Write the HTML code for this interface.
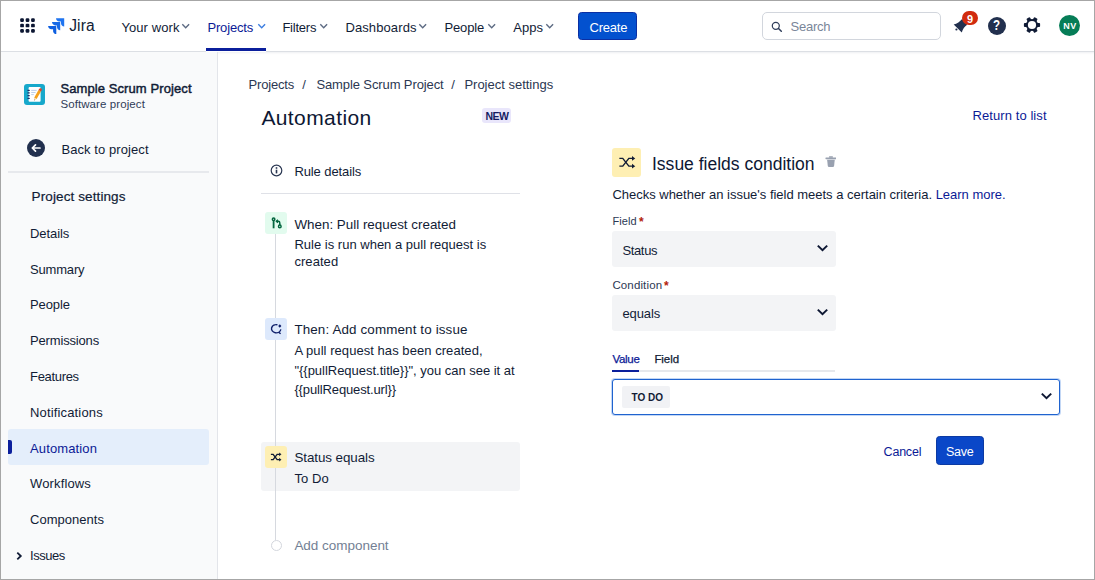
<!DOCTYPE html>
<html lang="en">
<head>
<meta charset="utf-8">
<title>Automation - Sample Scrum Project - Jira</title>
<style>
*{box-sizing:border-box;margin:0;padding:0}
html,body{width:1095px;height:580px;overflow:hidden;background:#fff}
body{font-family:"Liberation Sans",Arial,sans-serif;font-size:13px;color:#111c36;position:relative}
.abs,.t{position:absolute}
.t{white-space:nowrap;line-height:16px}
#frame{position:absolute;left:0;top:0;width:1095px;height:580px;border:1px solid #a6a6a6;z-index:50;pointer-events:none}
#hdr{position:absolute;left:0;top:0;width:1095px;height:52px;background:#fff;border-bottom:1px solid #dcdfe4;box-shadow:0 1px 2px rgba(9,30,66,.07)}
.nav{font-size:13px;top:19.5px}
.chev{position:absolute;top:23px}
#side{position:absolute;left:0;top:52px;width:218px;height:528px;background:#f9fafb;border-right:1px solid #e3e5ea}
.si{font-size:13px;left:30px}
.link{color:#0b1a96}
.desc{font-size:13px}
.ttl{font-size:13.4px}
.bc{top:76.500px;font-size:13px;color:#2b3752}
/*FIT*/
#jira{letter-spacing:0.090px}
#n1{letter-spacing:0.097px}
#n2{letter-spacing:-0.146px}
#n3{letter-spacing:-0.227px}
#n4{letter-spacing:0.109px}
#n5{letter-spacing:-0.114px}
#n6{letter-spacing:0.090px}
#create{letter-spacing:-0.239px}
#search{letter-spacing:-0.267px}
#pname{letter-spacing:0.094px}
#psub{letter-spacing:0.093px}
#back{letter-spacing:0.080px}
#pset{letter-spacing:0.106px}
#s1{letter-spacing:-0.079px}
#s2{letter-spacing:-0.175px}
#s3{letter-spacing:-0.114px}
#s4{letter-spacing:-0.163px}
#s5{letter-spacing:-0.314px}
#s6{letter-spacing:0.153px}
#s7{letter-spacing:0.123px}
#s8{letter-spacing:0.142px}
#s9{letter-spacing:0.028px}
#s10{letter-spacing:-0.463px}
#bc1{letter-spacing:-0.196px}
#bc2{letter-spacing:-0.106px}
#bc3{letter-spacing:-0.005px}
#h1{letter-spacing:0.397px}
#new{letter-spacing:-0.433px}
#rd{letter-spacing:-0.095px}
#w1{letter-spacing:0.003px}
#w2{letter-spacing:0.009px}
#w3{letter-spacing:0.061px}
#t1{letter-spacing:0.134px}
#t2{letter-spacing:0.054px}
#t3{letter-spacing:-0.019px}
#t4{letter-spacing:-0.131px}
#c1{letter-spacing:-0.074px}
#c2{letter-spacing:0.126px}
#ac{letter-spacing:-0.029px}
#rtl{letter-spacing:0.080px}
#h2{letter-spacing:0.006px}
#chk{letter-spacing:-0.013px}
#l1{letter-spacing:0.071px}
#v1{letter-spacing:-0.343px}
#l2{letter-spacing:0.134px}
#v2{letter-spacing:-0.085px}
#tb1{letter-spacing:-0.272px}
#tb2{letter-spacing:-0.067px}
#todo{letter-spacing:0.063px}
#cancel{letter-spacing:-0.220px}
#save{letter-spacing:-0.225px}
#nv{letter-spacing:0.442px}
/*ENDFIT*/
</style>
</head>
<body>
<!-- HEADER -->
<div id="hdr">
  <svg class="abs" style="left:20px;top:18px" width="15" height="15" viewBox="0 0 15 15" fill="#0c1632">
    <rect x="0.2" y="0.2" width="3.7" height="3.7" rx="1.2"/><rect x="5.65" y="0.2" width="3.7" height="3.7" rx="1.2"/><rect x="11.1" y="0.2" width="3.7" height="3.7" rx="1.2"/>
    <rect x="0.2" y="5.65" width="3.7" height="3.7" rx="1.2"/><rect x="5.65" y="5.65" width="3.7" height="3.7" rx="1.2"/><rect x="11.1" y="5.65" width="3.7" height="3.7" rx="1.2"/>
    <rect x="0.2" y="11.1" width="3.7" height="3.7" rx="1.2"/><rect x="5.65" y="11.1" width="3.7" height="3.7" rx="1.2"/><rect x="11.1" y="11.1" width="3.7" height="3.7" rx="1.2"/>
  </svg>
  <svg class="abs" style="left:48px;top:17.500px" width="16.500" height="16.500" viewBox="0 0 16.500 16.500">
    <path d="M8 0.200 H16.200 V8.400 C14.400 8.400 13 7 13 5.200 V3.500 H11.300 C9.500 3.500 8 2 8 0.200Z" fill="#1f74f0"/>
    <path d="M4 4.100 H12.200 V12.300 C10.400 12.300 9 10.900 9 9.100 V7.400 H7.300 C5.500 7.400 4 5.900 4 4.100Z" fill="#176ae6"/>
    <path d="M0.100 8 H8.300 V16.200 C6.500 16.200 5.100 14.800 5.100 13 V11.300 H3.400 C1.600 11.300 0.100 9.800 0.100 8Z" fill="#0e5fe0"/>
  </svg>
  <span class="t" id="jira" style="left:69.200px;top:15.800px;font-size:15.600px;line-height:20px;color:#111c36">Jira</span>

  <span class="t nav" id="n1" style="left:121.400px">Your work</span>
  <span class="t nav" id="n2" style="left:207.400px;color:#0b1a96">Projects</span>
  <span class="t nav" id="n3" style="left:282.400px">Filters</span>
  <span class="t nav" id="n4" style="left:345.400px">Dashboards</span>
  <span class="t nav" id="n5" style="left:444.400px">People</span>
  <span class="t nav" id="n6" style="left:513.200px">Apps</span>
  <svg class="chev" style="left:181px" width="9" height="7" viewBox="0 0 9 7"><path d="M1.300 1.300 L4.700 4.700 L8.100 1.300" fill="none" stroke="#5c6a82" stroke-width="1.400"/></svg>
  <svg class="chev" style="left:256.500px" width="9" height="7" viewBox="0 0 9 7"><path d="M1.300 1.300 L4.700 4.700 L8.100 1.300" fill="none" stroke="#3b7de0" stroke-width="1.400"/></svg>
  <svg class="chev" style="left:319px" width="9" height="7" viewBox="0 0 9 7"><path d="M1.300 1.300 L4.700 4.700 L8.100 1.300" fill="none" stroke="#5c6a82" stroke-width="1.400"/></svg>
  <svg class="chev" style="left:418px" width="9" height="7" viewBox="0 0 9 7"><path d="M1.300 1.300 L4.700 4.700 L8.100 1.300" fill="none" stroke="#5c6a82" stroke-width="1.400"/></svg>
  <svg class="chev" style="left:487px" width="9" height="7" viewBox="0 0 9 7"><path d="M1.300 1.300 L4.700 4.700 L8.100 1.300" fill="none" stroke="#5c6a82" stroke-width="1.400"/></svg>
  <svg class="chev" style="left:545px" width="9" height="7" viewBox="0 0 9 7"><path d="M1.300 1.300 L4.700 4.700 L8.100 1.300" fill="none" stroke="#5c6a82" stroke-width="1.400"/></svg>
  <div class="abs" style="left:206px;top:48px;width:60px;height:3px;background:#0b1f9c"></div>
  <div class="abs" style="left:206px;top:51px;width:60px;height:1px;background:#fff"></div>

  <div class="abs" style="left:578px;top:12px;width:59px;height:28px;background:#0351cf;border-radius:3.500px;border:1px solid #0b2fa3"></div>
  <span class="t" id="create" style="left:589.600px;top:19.500px;font-size:13px;color:#fff">Create</span>

  <div class="abs" style="left:762px;top:12px;width:179px;height:28px;border:1px solid #d2d6dd;border-radius:5px;background:#fff"></div>
  <svg class="abs" style="left:770.500px;top:20.500px" width="12" height="12" viewBox="0 0 12 12"><circle cx="4.800" cy="4.800" r="3.500" fill="none" stroke="#2f3d5a" stroke-width="1.250"/><path d="M7.500 7.500 L10.300 10.300" stroke="#2f3d5a" stroke-width="1.500" stroke-linecap="round"/></svg>
  <span class="t" id="search" style="left:790.600px;top:18.500px;font-size:13px;color:#7a8699">Search</span>

  <svg class="abs" style="left:951px;top:16px" width="20" height="20" viewBox="0 0 20 20">
    <path d="M2.700 8.500 C6 7.600 9 5.600 11.100 3 L16.200 8.800 C13.600 10.600 11.600 13.400 10.800 16.500 Z" fill="#22304e"/>
    <circle cx="5.400" cy="13.500" r="1.100" fill="#22304e"/>
  </svg>
  <div class="abs" style="left:962.400px;top:10.700px;width:15.600px;height:14.700px;border-radius:8px;background:#d12b0e"></div>
  <span class="t" id="nine" style="left:967px;top:11.800px;font-size:11px;line-height:15px;color:#fff;font-weight:bold">9</span>

  <div class="abs" style="left:988px;top:16.800px;width:17.800px;height:17.800px;border-radius:9px;background:#22304e"></div>
  <span class="t" id="qm" style="left:992.400px;top:17.300px;font-size:14.500px;line-height:17px;color:#fff;font-weight:bold;display:inline-block;transform:scaleX(.8)">?</span>

  <svg class="abs" style="left:1021.700px;top:15.400px" width="20" height="20" viewBox="0 0 20 20">
    <g fill="#111c36">
      <rect x="8" y="1.900" width="4" height="16.200" rx="1" transform="rotate(30 10 10)"/>
      <rect x="8" y="1.900" width="4" height="16.200" rx="1" transform="rotate(90 10 10)"/>
      <rect x="8" y="1.900" width="4" height="16.200" rx="1" transform="rotate(150 10 10)"/>
      <circle cx="10" cy="10" r="6.100"/>
    </g>
    <circle cx="10" cy="10" r="4.100" fill="#fff"/>
  </svg>

  <div class="abs" style="left:1059px;top:15px;width:21px;height:21px;border-radius:11px;background:#067d57"></div>
  <span class="t" id="nv" style="left:1063.300px;top:17.800px;font-size:9px;line-height:16px;color:#fff;font-weight:bold">NV</span>
</div>

<!-- SIDEBAR -->
<div id="side"></div>
<div class="abs" style="left:24px;top:84px;width:21px;height:21px;border-radius:3px;background:#17a8cb"></div>
<svg class="abs" style="left:24px;top:84px" width="21" height="21" viewBox="0 0 21 21">
  <rect x="4.600" y="3" width="12" height="14.800" rx="1" fill="#fefefe"/>
  <g fill="#1d2f6b"><rect x="3.400" y="5.700" width="2.400" height="1.200" rx=".5"/><rect x="3.400" y="8.300" width="2.400" height="1.200" rx=".5"/><rect x="3.400" y="11" width="2.400" height="1.200" rx=".5"/><rect x="3.400" y="13.800" width="2.400" height="1.200" rx=".5"/></g>
  <g stroke="#b5cbe8" stroke-width=".9"><path d="M7.200 6.400H12.600M7.200 8.500H11.600M7.200 10.600H9.800"/></g>
  <path d="M14.480 6.110 L16.920 7.490 L12.620 15.090 L10.180 13.710Z" fill="#f5a11c"/>
  <path d="M14.480 6.110 L15.100 5 C15.600 4.200 16.600 4.100 17.300 4.600 C18 5.100 18.100 5.900 17.600 6.500 L16.920 7.490Z" fill="#e0442e"/>
  <path d="M10.180 13.710 L12.620 15.090 L10.200 16.600Z" fill="#f3d7a6"/>
  <path d="M10.160 15.500 L11 16.050 L10.200 16.600Z" fill="#333"/>
</svg>
<span class="t" id="pname" style="left:60.400px;top:80.500px;font-size:13px;-webkit-text-stroke:.45px #111c36">Sample Scrum Project</span>
<span class="t" id="psub" style="left:60.400px;top:96px;font-size:11.500px;color:#303c58">Software project</span>

<div class="abs" style="left:27px;top:139px;width:18px;height:18px;border-radius:9px;background:#22304e"></div>
<svg class="abs" style="left:27px;top:139px" width="18" height="18" viewBox="0 0 18 18"><path d="M13 9 H5.500 M8.500 5.800 L5.300 9 L8.500 12.200" fill="none" stroke="#fff" stroke-width="1.700" stroke-linecap="round" stroke-linejoin="round"/></svg>
<span class="t" id="back" style="left:61.400px;top:141.500px;font-size:13px">Back to project</span>
<div class="abs" style="left:8px;top:171px;width:201px;height:2px;background:#e7e9ed"></div>
<span class="t" id="pset" style="left:31.600px;top:189.300px;font-size:13.500px;-webkit-text-stroke:.2px #111c36">Project settings</span>

<div class="abs" style="left:8px;top:429px;width:201px;height:36px;border-radius:3px;background:#e4eefb"></div>
<div class="abs" style="left:8px;top:440px;width:4px;height:14px;border-radius:0 2px 2px 0;background:#0b1f9c"></div>
<span class="t si" id="s1" style="top:225.500px">Details</span>
<span class="t si" id="s2" style="top:261.500px">Summary</span>
<span class="t si" id="s3" style="top:296.500px">People</span>
<span class="t si" id="s4" style="top:332.500px">Permissions</span>
<span class="t si" id="s5" style="top:368.500px">Features</span>
<span class="t si" id="s6" style="top:404.500px">Notifications</span>
<span class="t si" id="s7" style="top:440.500px;color:#0b1a96">Automation</span>
<span class="t si" id="s8" style="top:475.500px">Workflows</span>
<span class="t si" id="s9" style="top:511.500px">Components</span>
<span class="t si" id="s10" style="top:547.500px">Issues</span>
<svg class="abs" style="left:15px;top:550.500px" width="8" height="10" viewBox="0 0 8 10"><path d="M2.300 1.600 L5.800 5 L2.300 8.400" fill="none" stroke="#111c36" stroke-width="1.800"/></svg>

<!-- MAIN LEFT -->
<span class="t bc" id="bc1" style="left:248.600px">Projects</span>
<span class="t bc" style="left:302.300px">/</span>
<span class="t bc" id="bc2" style="left:316.400px">Sample Scrum Project</span>
<span class="t bc" style="left:451.200px">/</span>
<span class="t bc" id="bc3" style="left:464.400px">Project settings</span>
<span class="t" id="h1" style="left:261.400px;top:103.700px;font-size:21px;line-height:28px;color:#0d1733">Automation</span>
<div class="abs" style="left:481.600px;top:107.800px;width:29px;height:14.800px;border-radius:3px;background:#e9e6fb"></div>
<span class="t" id="new" style="left:485.400px;top:108px;font-size:10.500px;font-weight:bold;color:#151c63">NEW</span>

<svg class="abs" style="left:269.600px;top:163.600px" width="13" height="13" viewBox="0 0 13 13"><circle cx="6.500" cy="6.500" r="5.300" fill="none" stroke="#2b3853" stroke-width="1.200"/><rect x="5.700" y="5.700" width="1.600" height="3.700" fill="#2b3853"/><rect x="5.700" y="3.200" width="1.600" height="1.600" fill="#2b3853"/></svg>
<span class="t desc" id="rd" style="left:294.400px;top:163.500px">Rule details</span>
<div class="abs" style="left:261px;top:193px;width:259px;height:1px;background:#dfe1e7"></div>

<span class="t ttl" id="w1" style="left:294.400px;top:217.400px">When: Pull request created</span>
<span class="t desc" id="w2" style="left:294.400px;top:237px">Rule is run when a pull request is</span>
<span class="t desc" id="w3" style="left:294.400px;top:254px">created</span>

<span class="t ttl" id="t1" style="left:294.400px;top:322.300px">Then: Add comment to issue</span>
<span class="t desc" id="t2" style="left:294.400px;top:343px">A pull request has been created,</span>
<span class="t desc" id="t3" style="left:294.400px;top:362.500px">"{{pullRequest.title}}", you can see it at</span>
<span class="t desc" id="t4" style="left:294.400px;top:381.500px">{{pullRequest.url}}</span>

<div class="abs" style="left:261px;top:442px;width:259px;height:49px;border-radius:3px;background:#f3f4f6"></div>
<div class="abs" style="left:275px;top:234px;width:1px;height:306px;background:#d6d9df"></div>
<div class="abs" style="left:265px;top:212px;width:22px;height:22px;border-radius:3px;background:#e2fbee"></div>
<svg class="abs" style="left:270.500px;top:217px" width="11" height="12" viewBox="0 0 11 12" fill="none" stroke="#04663f" stroke-width="1.500">
  <circle cx="2.600" cy="2.200" r="1.250"/><path d="M2.600 3.500 V11.300" stroke-width="1.800"/><path d="M5.600 4.200 H7.300 C8.400 4.200 8.800 4.800 8.800 5.900 V8"/><circle cx="8.800" cy="9.400" r="1.300"/><path d="M6.900 2.700 L5.300 4.200 L6.900 5.700" stroke-width="1.300"/>
</svg>
<div class="abs" style="left:265px;top:318px;width:22px;height:22px;border-radius:3px;background:#dde9fc"></div>
<svg class="abs" style="left:270px;top:323px" width="13" height="12" viewBox="0 0 13 12" fill="none" stroke="#10206b" stroke-width="1.400">
  <path d="M7.420 1.740 A4.700 4.100 0 1 0 10.830 6.410"/><path d="M9.800 1.200 L11.400 3 L9.800 4.800 L8.200 3Z" fill="#10206b" stroke="none"/><path d="M8.700 9.200 L10.600 10.800" stroke-width="1.500"/>
</svg>
<div class="abs" style="left:265px;top:446px;width:22px;height:22px;border-radius:3px;background:#feefb3"></div>
<svg class="abs" style="left:270px;top:452px" width="12.500" height="10" viewBox="0 0 14 12" preserveAspectRatio="none" fill="none" stroke="#111c36" stroke-width="1.500">
  <path d="M1 2.800 H3.500 L8 9.200 H11"/><path d="M1 9.200 H3.500 L8 2.800 H11"/><path d="M10.300 0.600 L12.800 2.800 L10.300 5Z" fill="#111c36" stroke="none"/><path d="M10.300 7 L12.800 9.200 L10.300 11.400Z" fill="#111c36" stroke="none"/>
</svg>
<span class="t ttl" id="c1" style="left:294.400px;top:450px">Status equals</span>
<span class="t desc" id="c2" style="left:294.400px;top:470.500px">To Do</span>

<div class="abs" style="left:270.500px;top:540px;width:11px;height:11px;border-radius:6px;background:#fff;border:1.500px solid #d3d6dd"></div>
<span class="t" id="ac" style="left:294.400px;top:538px;font-size:13.500px;color:#737f94">Add component</span>

<!-- MAIN RIGHT -->
<span class="t link" id="rtl" style="left:972.500px;top:108.200px;font-size:13px">Return to list</span>

<div class="abs" style="left:612px;top:148px;width:29px;height:29px;border-radius:3px;background:#feefb3"></div>
<svg class="abs" style="left:617.600px;top:155px" width="19" height="14.600" viewBox="0 0 14 12" preserveAspectRatio="none" fill="none" stroke="#111c36" stroke-width="1">
  <path d="M1 2.800 H3.500 L8 9.200 H11"/><path d="M1 9.200 H3.500 L8 2.800 H11"/><path d="M10.300 0.800 L12.700 2.800 L10.300 4.800Z" fill="#111c36" stroke="none"/><path d="M10.300 7.200 L12.700 9.200 L10.300 11.200Z" fill="#111c36" stroke="none"/>
</svg>
<span class="t" id="h2" style="left:652px;top:153px;font-size:17.500px;line-height:22px;color:#0d1733">Issue fields condition</span>
<svg class="abs" style="left:824.600px;top:155.800px" width="11.900" height="11.700" viewBox="0 0 13 13" preserveAspectRatio="none" fill="#99a1b0"><rect x="0.500" y="1.600" width="12" height="1.900" rx=".6"/><rect x="4.300" y=".4" width="4.400" height="1.600" rx=".5"/><path d="M2.300 4.300 H10.700 L9.900 11 C9.800 11.700 9.400 12.100 8.700 12.100 H4.300 C3.600 12.100 3.200 11.700 3.100 11Z"/></svg>

<span class="t" id="chk" style="left:612.400px;top:187px;font-size:13px">Checks whether an issue's field meets a certain criteria. <span class="link">Learn more.</span></span>

<span class="t" id="l1" style="left:612.400px;top:212.800px;font-size:11px;color:#2c3854">Field</span>
<span class="t" style="left:639px;top:213.500px;font-size:12px;color:#b3200c;font-weight:bold">*</span>
<div class="abs" style="left:612px;top:231px;width:224px;height:36px;border-radius:3px;background:#f3f4f6"></div>
<span class="t" id="v1" style="left:622.400px;top:242.500px;font-size:13px">Status</span>
<svg class="abs" style="left:816px;top:243.500px" width="13" height="9" viewBox="0 0 13 9"><path d="M1.800 1.600 L6.500 6.100 L11.200 1.600" fill="none" stroke="#0d1733" stroke-width="2"/></svg>

<span class="t" id="l2" style="left:612.400px;top:276.600px;font-size:11.500px;color:#2c3854">Condition</span>
<span class="t" style="left:664px;top:277.500px;font-size:12px;color:#b3200c;font-weight:bold">*</span>
<div class="abs" style="left:612px;top:295px;width:224px;height:36px;border-radius:3px;background:#f3f4f6"></div>
<span class="t" id="v2" style="left:622.400px;top:306px;font-size:13px">equals</span>
<svg class="abs" style="left:816px;top:307.500px" width="13" height="9" viewBox="0 0 13 9"><path d="M1.800 1.600 L6.500 6.100 L11.200 1.600" fill="none" stroke="#0d1733" stroke-width="2"/></svg>

<span class="t" id="tb1" style="left:612.400px;top:351px;font-size:11.500px;color:#0b1a96;-webkit-text-stroke:.25px #0b1a96">Value</span>
<span class="t" id="tb2" style="left:654.400px;top:351px;font-size:11.500px;-webkit-text-stroke:.25px #111c36">Field</span>
<div class="abs" style="left:612px;top:370px;width:223px;height:2px;background:#e6e8ec"></div>
<div class="abs" style="left:612px;top:370px;width:27px;height:2px;background:#0b1f9c"></div>

<div class="abs" style="left:612px;top:379px;width:448px;height:36px;border-radius:3px;background:#fff;border:1px solid #1f63cf;box-shadow:0 0 0 1px rgba(38,110,220,.28)"></div>
<div class="abs" style="left:622px;top:386px;width:48px;height:22px;border-radius:2px;background:#f1f2f5"></div>
<span class="t" id="todo" style="left:631.400px;top:390px;font-size:10px;font-weight:bold;color:#111c36">TO DO</span>
<svg class="abs" style="left:1040.200px;top:392px" width="13" height="9" viewBox="0 0 13 9"><path d="M1.800 1.600 L6.500 6.100 L11.200 1.600" fill="none" stroke="#0d1733" stroke-width="2"/></svg>

<span class="t link" id="cancel" style="left:883.600px;top:443.700px;font-size:12.500px">Cancel</span>
<div class="abs" style="left:936px;top:436px;width:48px;height:29px;border-radius:3.500px;background:#0a47c8;border:1px solid #0c3aa3"></div>
<span class="t" id="save" style="left:946px;top:443.700px;font-size:12.500px;color:#fff">Save</span>

<div id="frame"></div>
</body>
</html>
